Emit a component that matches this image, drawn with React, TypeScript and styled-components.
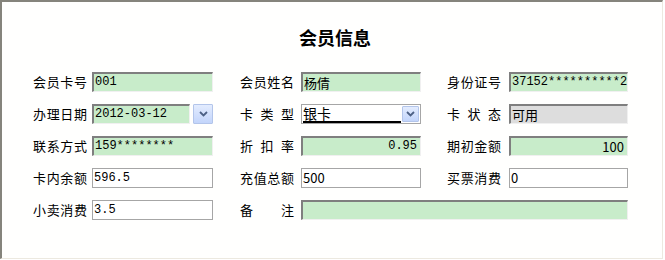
import React from "react";
import styled, { createGlobalStyle, css } from "styled-components";

const Global = createGlobalStyle`
  html, body { margin: 0; padding: 0; background: #ffffff; }
  body { font-family: "Noto Sans CJK SC", "Liberation Sans", sans-serif; }
`;

const Frame = styled.div`
  box-sizing: border-box;
  width: 663px;
  height: 259px;
  border-top: 2px solid #85847c;
  border-left: 2px solid #85847c;
  border-right: 1px solid #ece9e0;
  border-bottom: 1px solid #ece9e0;
  background: #fffffe;
  padding: 24px 0 0 31px;
`;

const Title = styled.div`
  width: 600px;
  text-align: center;
  font-size: 18px;
  line-height: 22px;
  font-weight: bold;
  color: #000;
  padding-left: 2px;
  margin-bottom: 24px;
`;

const Grid = styled.div`
  display: grid;
  grid-template-columns: 207px 207px 190px;
  row-gap: 12px;
`;

const Field = styled.div<{ $span?: number }>`
  display: flex;
  align-items: center;
  height: 20px;
  ${(p) => p.$span && css`grid-column: span ${p.$span};`}
`;

const Label = styled.span<{ $w: number }>`
  width: 54px;
  margin-right: ${(p) => p.$w - 54}px;
  font-size: 13px;
  line-height: 20px;
  color: #000;
  text-align: justify;
  text-align-last: justify;
  white-space: nowrap;
`;

type Kind = "green" | "white" | "gray";

const Box = styled.div<{ $kind: Kind; $w: number; $right?: boolean; $mono?: boolean }>`
  box-sizing: border-box;
  width: ${(p) => p.$w}px;
  height: 20px;
  overflow: hidden;
  white-space: nowrap;
  font-size: ${(p) => (p.$mono ? 12 : 13)}px;
  line-height: 17px;
  color: #000;
  font-family: ${(p) => (p.$mono ? `"Liberation Mono", monospace` : `"Noto Sans CJK SC", "Liberation Sans", sans-serif`)};
  text-align: ${(p) => (p.$right ? "right" : "left")};
  padding: 0 ${(p) => (p.$right ? "3px" : "0")} 0 1px;
  ${(p) =>
    p.$kind === "white"
      ? css`
          background: #fff;
          border: 1px solid #a6a6a6;
          line-height: 18px;
        `
      : css`
          background: ${p.$kind === "green" ? "#c8ecca" : "#dddddd"};
          border-top: 2px solid #7f7f7f;
          border-left: 2px solid #7f7f7f;
          border-right: 1px solid #f0f0f0;
          border-bottom: 1px solid #f0f0f0;
        `}
`;

const DropBtn = styled.div<{ $inset?: boolean }>`
  box-sizing: border-box;
  width: ${(p) => (p.$inset ? 17 : 20)}px;
  height: ${(p) => (p.$inset ? 16 : 20)}px;
  margin-left: ${(p) => (p.$inset ? 0 : 3)}px;
  border: 1px solid #b3c5ea;
  border-radius: 1px;
  background: linear-gradient(#e3ecfe, #c3d5fb);
  display: flex;
  align-items: center;
  justify-content: center;
  flex-shrink: 0;
`;

const Select = styled.div`
  box-sizing: border-box;
  width: 120px;
  height: 20px;
  border: 1px solid #a6a6a6;
  background: #fff;
  display: flex;
  align-items: center;
  padding: 0 1px 0 1px;
`;

const SelText = styled.span`
  flex: 1;
  font-size: 14px;
  line-height: 15px;
  border-bottom: 2px solid #000;
  margin-right: 1px;
  margin-top: 1px;
`;

const Chevron = () => (
  <svg width="9" height="6" viewBox="0 0 9 6">
    <path d="M1 1 L4.5 4.5 L8 1" fill="none" stroke="#4d6185" strokeWidth="1.8" />
  </svg>
);

export default function App() {
  return (
    <>
      <Global />
      <Frame>
        <Title>会员信息</Title>
        <Grid>
          <Field>
            <Label $w={59}>会员卡号</Label>
            <Box $kind="green" $w={121} $mono>001</Box>
          </Field>
          <Field>
            <Label $w={61}>会员姓名</Label>
            <Box $kind="green" $w={120}>杨倩</Box>
          </Field>
          <Field>
            <Label $w={62}>身份证号</Label>
            <Box $kind="green" $w={119} $mono>37152**********2</Box>
          </Field>

          <Field>
            <Label $w={59}>办理日期</Label>
            <Box $kind="green" $w={98} $mono>2012-03-12</Box>
            <DropBtn><Chevron /></DropBtn>
          </Field>
          <Field>
            <Label $w={61}>卡 类 型</Label>
            <Select>
              <SelText>银卡</SelText>
              <DropBtn $inset><Chevron /></DropBtn>
            </Select>
          </Field>
          <Field>
            <Label $w={62}>卡 状 态</Label>
            <Box $kind="gray" $w={119}>可用</Box>
          </Field>

          <Field>
            <Label $w={59}>联系方式</Label>
            <Box $kind="green" $w={121} $mono>159********</Box>
          </Field>
          <Field>
            <Label $w={61}>折 扣 率</Label>
            <Box $kind="green" $w={120} $mono $right>0.95</Box>
          </Field>
          <Field>
            <Label $w={62}>期初金额</Label>
            <Box $kind="green" $w={119} $right>100</Box>
          </Field>

          <Field>
            <Label $w={59}>卡内余额</Label>
            <Box $kind="white" $w={121} $mono>596.5</Box>
          </Field>
          <Field>
            <Label $w={61}>充值总额</Label>
            <Box $kind="white" $w={120}>500</Box>
          </Field>
          <Field>
            <Label $w={62}>买票消费</Label>
            <Box $kind="white" $w={119}>0</Box>
          </Field>

          <Field>
            <Label $w={59}>小卖消费</Label>
            <Box $kind="white" $w={121} $mono>3.5</Box>
          </Field>
          <Field $span={2}>
            <Label $w={61}>备 注</Label>
            <Box $kind="green" $w={327}></Box>
          </Field>
        </Grid>
      </Frame>
    </>
  );
}
